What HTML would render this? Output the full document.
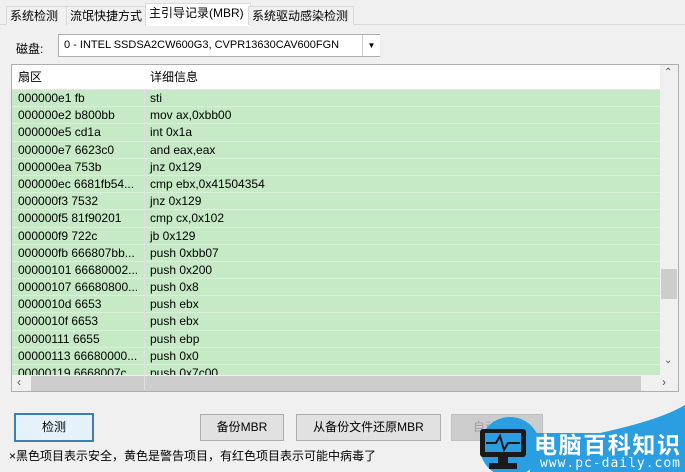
<!DOCTYPE html><html><head><style>
body{margin:0;width:685px;height:472px;background:#f0f0f0;font-family:"Liberation Sans","Noto Sans CJK SC",sans-serif;font-size:12px;color:#000;position:relative;overflow:hidden}
.a{position:absolute}
.tab{position:absolute;top:6px;height:18px;border:1px solid #d9d9d9;border-bottom:none;background:#f0f0f0;line-height:18px;padding:0 3px;font-size:12px}
.btn{position:absolute;top:414px;height:25px;border:1px solid #adadad;background:#e1e1e1;text-align:center;line-height:25px}
.row{height:17.2px;line-height:17px;border-bottom:1px solid #dcefdc;background:#c6e9c6;position:relative;box-sizing:border-box}
.row span{position:absolute;left:6px}.row i{font-style:normal;position:absolute;left:138px}
</style></head><body>
<div class="a" style="left:0;top:24px;width:685px;height:1px;background:#d9d9d9"></div>
<div class="tab" style="left:6px;width:58px">系统检测</div>
<div class="tab" style="left:66px;width:76px">流氓快捷方式</div>
<div class="tab" style="left:145px;top:3px;height:22px;width:98px;background:#fff">主引导记录(MBR)</div>
<div class="tab" style="left:248px;width:98px">系统驱动感染检测</div>
<div class="a" style="left:16px;top:40px;font-size:12px">磁盘:</div>
<div class="a" style="left:58px;top:34px;width:322px;height:23px;border:1px solid #adadad;background:#fff;box-sizing:border-box;line-height:21px;padding-left:5px;font-size:11px;white-space:nowrap;overflow:hidden">0 - INTEL SSDSA2CW600G3, CVPR13630CAV600FGN</div>
<div class="a" style="left:362px;top:35px;width:17px;height:21px;border-left:1px solid #ccc;text-align:center;line-height:21px;font-size:8px;background:#fff">▼</div>
<div class="a" style="left:11px;top:64px;width:668px;height:328px;border:1px solid #adadad;background:#fff;box-sizing:border-box;overflow:hidden">
<div style="height:24px;line-height:24px;position:relative;border-bottom:1px solid #e5e5e5"><span class="a" style="left:6px">扇区</span><span class="a" style="left:138px">详细信息</span></div>
<div style="width:648px;position:relative">
<div class="a" style="left:132px;top:0;width:1px;height:300px;background:#e0e0e0;z-index:1"></div>
<div class="row"><span>000000e1 fb</span><i>sti</i></div>
<div class="row"><span>000000e2 b800bb</span><i>mov ax,0xbb00</i></div>
<div class="row"><span>000000e5 cd1a</span><i>int 0x1a</i></div>
<div class="row"><span>000000e7 6623c0</span><i>and eax,eax</i></div>
<div class="row"><span>000000ea 753b</span><i>jnz 0x129</i></div>
<div class="row"><span>000000ec 6681fb54...</span><i>cmp ebx,0x41504354</i></div>
<div class="row"><span>000000f3 7532</span><i>jnz 0x129</i></div>
<div class="row"><span>000000f5 81f90201</span><i>cmp cx,0x102</i></div>
<div class="row"><span>000000f9 722c</span><i>jb 0x129</i></div>
<div class="row"><span>000000fb 666807bb...</span><i>push 0xbb07</i></div>
<div class="row"><span>00000101 66680002...</span><i>push 0x200</i></div>
<div class="row"><span>00000107 66680800...</span><i>push 0x8</i></div>
<div class="row"><span>0000010d 6653</span><i>push ebx</i></div>
<div class="row"><span>0000010f 6653</span><i>push ebx</i></div>
<div class="row"><span>00000111 6655</span><i>push ebp</i></div>
<div class="row"><span>00000113 66680000...</span><i>push 0x0</i></div>
<div class="row"><span>00000119 6668007c</span><i>push 0x7c00</i></div>
</div>
<div class="a" style="left:648px;top:0;width:18px;height:310px;background:#f0f0f0"></div>
<div class="a" style="left:652px;top:2px;font-size:10px;color:#555">⌃</div>
<div class="a" style="left:652px;top:290px;font-size:10px;color:#555">⌄</div>
<div class="a" style="left:649px;top:204px;width:16px;height:30px;background:#cdcdcd"></div>
<div class="a" style="left:0;top:310px;width:666px;height:17px;background:#f0f0f0"></div>
<div class="a" style="left:19px;top:311px;width:610px;height:15px;background:#cdcdcd"></div>
<div class="a" style="left:5px;top:310px;font-size:12px;color:#555">‹</div>
<div class="a" style="left:650px;top:310px;font-size:12px;color:#555">›</div>
</div>
<div class="btn" style="left:14px;width:76px;border:2px solid #3c7fb1;top:413px;background:#e5f1fb">检测</div>
<div class="btn" style="left:200px;width:82px">备份MBR</div>
<div class="btn" style="left:296px;width:143px">从备份文件还原MBR</div>
<div class="btn" style="left:451px;width:90px;color:#a0a0a0;background:#ccc;border-color:#bfbfbf">自动修复</div>
<div class="a" style="left:9px;top:447px;font-size:12px">×黑色项目表示安全，黄色是警告项目，有红色项目表示可能中病毒了</div>
<svg class="a" style="left:470px;top:395px" width="215" height="77">
<path d="M60 77 L215 77 L215 10 Q190 25 130 38 L60 38 Z" fill="#2a9ee0"/>
<circle cx="40" cy="52" r="30" fill="#2a9ee0"/>
<rect x="10" y="34" width="46" height="28" rx="3" fill="#1a1a1a"/><rect x="15" y="38" width="36" height="19" fill="#2a9ee0"/><path d="M16 48 L26 48 L30 41 L34 55 L38 48 L50 48" stroke="#1a1a1a" stroke-width="2" fill="none"/><rect x="28" y="62" width="10" height="6" fill="#1a1a1a"/><rect x="19" y="68" width="28" height="6" fill="#1a1a1a"/>
<text x="64" y="58" font-family="Noto Sans CJK SC,sans-serif" font-weight="bold" font-size="23" fill="#fff" textLength="146">电脑百科知识</text>
<text x="70" y="72" font-family="DejaVu Sans Mono,monospace" font-size="13" fill="#fff" textLength="140">www.pc-daily.com</text></svg>
</body></html>
